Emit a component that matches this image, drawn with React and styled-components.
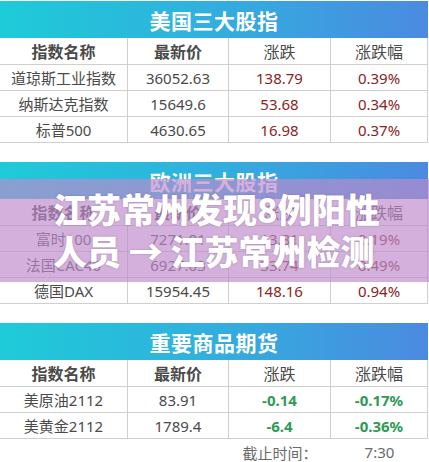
import React from "react";
import styled, { createGlobalStyle } from "styled-components";

const Global = createGlobalStyle`
  html, body { margin: 0; padding: 0; background: #ffffff; }
  body { font-family: "Noto Sans", "Noto Sans CJK SC", sans-serif; }
`;

const Page = styled.div`
  position: relative;
  width: 429px;
  height: 462px;
  overflow: hidden;
  padding-top: 1px;
  box-sizing: border-box;
  display: flex;
  flex-direction: column;
  gap: 19px;
`;

const Section = styled.section`
  display: flex;
  flex-direction: column;
  width: 428px;
`;

const TitleBar = styled.div`
  height: 37px;
  display: flex;
  align-items: center;
  justify-content: center;
  background: linear-gradient(to right, #1ecbd8 0%, #2fb2de 45%, #4b8ae0 100%);
  color: #ffffff;
  font-family: "Noto Sans CJK SC", sans-serif;
  font-weight: 700;
  font-size: 21px;
  letter-spacing: 0.5px;
`;

const Grid = styled.div`
  display: grid;
  grid-template-columns: 128px 101px 102px 97px;
`;

const Cell = styled.div`
  box-sizing: border-box;
  height: ${(p) => (p.$head ? 27 : 26)}px;
  border-bottom: ${(p) => (p.$plain ? "none" : "1px solid #cfcfcf")};
  border-right: ${(p) => (p.$plain ? "none" : "1px solid #cfcfcf")};
  display: flex;
  align-items: center;
  justify-content: center;
  font-family: "Noto Sans", "Noto Sans CJK SC", sans-serif;
  font-size: ${(p) => (p.$head ? 16 : 15)}px;
  font-weight: ${(p) => (p.$bold ? 700 : 400)};
  color: ${(p) =>
    p.$tone === "up"
      ? "#8a2424"
      : p.$tone === "down"
      ? "#2f9a55"
      : p.$tone === "muted"
      ? "#6a6a6a"
      : "#4a4a4a"};
  white-space: nowrap;
`;

const Overlay = styled.div`
  position: absolute;
  left: 0;
  top: 179px;
  width: 429px;
  height: 103px;
  box-sizing: border-box;
  padding: 9px 0 0 53px;
  background: rgba(190, 138, 203, 0.67);
`;

const OverlayText = styled.div`
  font-family: "Noto Sans CJK SC", sans-serif;
  font-weight: 900;
  font-size: 34px;
  line-height: 42px;
  color: #ffffff;
  text-shadow: 0 0 2px rgba(60, 40, 70, 0.35);
  white-space: nowrap;
`;

const tables = [
  {
    title: "美国三大股指",
    rows: [
      ["道琼斯工业指数", "36052.63", "138.79", "0.39%"],
      ["纳斯达克指数", "15649.6", "53.68", "0.34%"],
      ["标普500", "4630.65", "16.98", "0.37%"],
    ],
  },
  {
    title: "欧洲三大股指",
    rows: [
      ["富时100", "7271.81", "13.81", "0.19%"],
      ["法国CAC40", "6927.03", "33.74", "0.49%"],
      ["德国DAX", "15954.45", "148.16", "0.94%"],
    ],
  },
  {
    title: "重要商品期货",
    rows: [
      ["美原油2112", "83.91", "-0.14", "-0.17%"],
      ["美黄金2112", "1789.4", "-6.4", "-0.36%"],
    ],
    footer: true,
  },
];

function Table({ title, rows, footer }) {
  return (
    <Section>
      <TitleBar>{title}</TitleBar>
      <Grid>
        <Cell $head $bold>指数名称</Cell>
        <Cell $head $bold>最新价</Cell>
        <Cell $head>涨跌</Cell>
        <Cell $head>涨跌幅</Cell>
        {rows.map((r) => {
          const down = r[2].startsWith("-");
          return (
            <React.Fragment key={r[0]}>
              <Cell>{r[0]}</Cell>
              <Cell>{r[1]}</Cell>
              <Cell $tone={down ? "down" : "up"} $bold={down}>{r[2]}</Cell>
              <Cell $tone={down ? "down" : "up"} $bold={down}>{r[3]}</Cell>
            </React.Fragment>
          );
        })}
        {footer && (
          <>
            <Cell $plain />
            <Cell $plain />
            <Cell $plain $tone="muted">截止时间：</Cell>
            <Cell $plain $tone="muted">7:30</Cell>
          </>
        )}
      </Grid>
    </Section>
  );
}

export default function App() {
  return (
    <>
      <Global />
      <Page>
        {tables.map((t) => (
          <Table key={t.title} {...t} />
        ))}
        <Overlay>
          <OverlayText>江苏常州发现8例阳性</OverlayText>
          <OverlayText>人员 → 江苏常州检测</OverlayText>
        </Overlay>
      </Page>
    </>
  );
}
